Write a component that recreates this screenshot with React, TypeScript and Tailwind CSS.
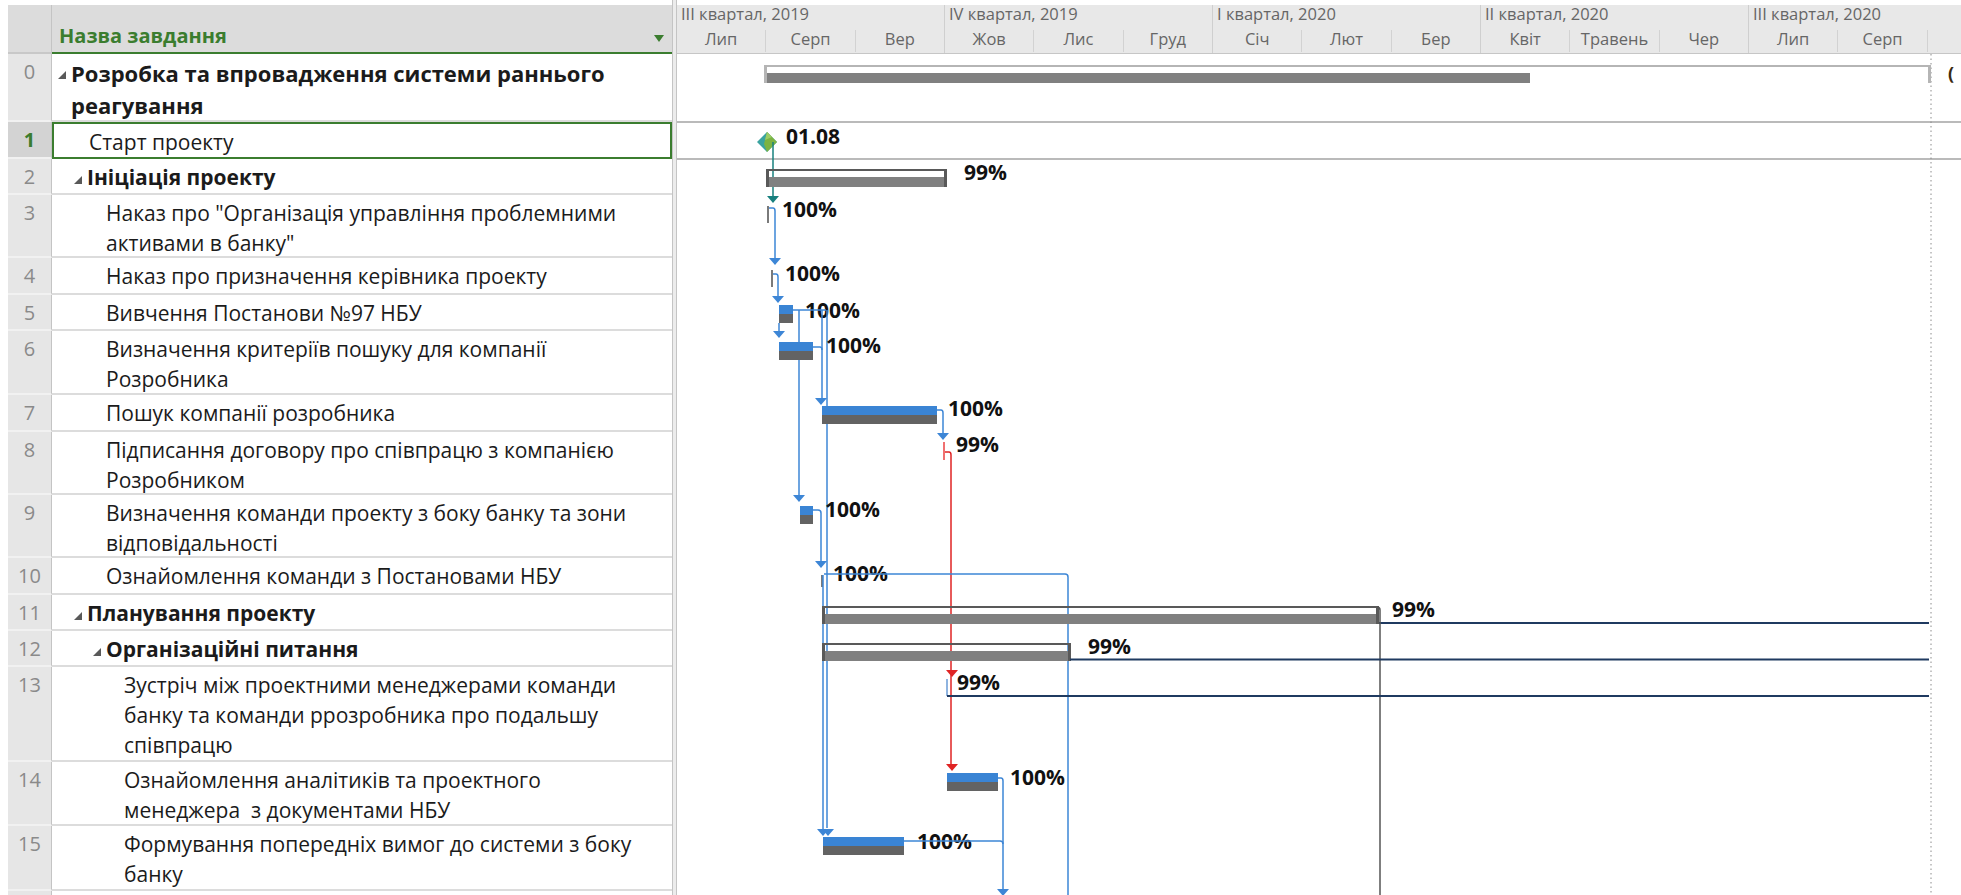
import React from "react";

type Task = {
  id: number;
  lines: string[];
  h: string;
  pad: string;
  summary?: boolean;
  big?: boolean;
  selected?: boolean;
};

const tasks: Task[] = [
  { id: 0, lines: ["Розробка та впровадження системи раннього", "реагування"], h: "h-[68px]", pad: "pl-[6px]", summary: true, big: true },
  { id: 1, lines: ["Старт проекту"], h: "h-[37px]", pad: "pl-[35px]", selected: true },
  { id: 2, lines: ["Ініціація проекту"], h: "h-[36px]", pad: "pl-[22px]", summary: true },
  { id: 3, lines: ['Наказ про "Організація управління проблемними', 'активами в банку"'], h: "h-[63px]", pad: "pl-[54px]" },
  { id: 4, lines: ["Наказ про призначення керівника проекту"], h: "h-[37px]", pad: "pl-[54px]" },
  { id: 5, lines: ["Вивчення Постанови №97 НБУ"], h: "h-[36px]", pad: "pl-[54px]" },
  { id: 6, lines: ["Визначення критеріїв пошуку для компанії", "Розробника"], h: "h-[64px]", pad: "pl-[54px]" },
  { id: 7, lines: ["Пошук компанії розробника"], h: "h-[37px]", pad: "pl-[54px]" },
  { id: 8, lines: ["Підписання договору про співпрацю з компанією", "Розробником"], h: "h-[63px]", pad: "pl-[54px]" },
  { id: 9, lines: ["Визначення команди проекту з боку банку та зони", "відповідальності"], h: "h-[63px]", pad: "pl-[54px]" },
  { id: 10, lines: ["Ознайомлення команди з Постановами НБУ"], h: "h-[37px]", pad: "pl-[54px]" },
  { id: 11, lines: ["Планування проекту"], h: "h-[36px]", pad: "pl-[22px]", summary: true },
  { id: 12, lines: ["Організаційні питання"], h: "h-[36px]", pad: "pl-[41px]", summary: true },
  { id: 13, lines: ["Зустріч між проектними менеджерами команди", "банку та команди ррозробника про подальшу", "співпрацю"], h: "h-[95px]", pad: "pl-[72px]" },
  { id: 14, lines: ["Ознайомлення аналітиків та проектного", "менеджера  з документами НБУ"], h: "h-[64px]", pad: "pl-[72px]" },
  { id: 15, lines: ["Формування попередніх вимог до системи з боку", "банку"], h: "h-[65px]", pad: "pl-[72px]" },
];

// the last month of the final quarter sits past the visible edge, so no label is drawn for it
const quarters = [
  { label: "III квартал, 2019", months: ["Лип", "Серп", "Вер"] },
  { label: "IV квартал, 2019", months: ["Жов", "Лис", "Груд"] },
  { label: "I квартал, 2020", months: ["Січ", "Лют", "Бер"] },
  { label: "II квартал, 2020", months: ["Квіт", "Травень", "Чер"] },
  { label: "III квартал, 2020", months: ["Лип", "Серп", ""] },
];

const BLUE = "#3d86d6";
const BAR_BLUE = "#3a84d4";
const BAR_GRAY = "#636363";
const RED = "#e02424";
const NAVY = "#1f3a60";

const Collapse = () => (
  <span className="w-[13px] shrink-0 flex items-center h-[30px] pt-[6px]">
    <svg width="8" height="8" viewBox="0 0 8 8">
      <polygon points="8,0 8,8 0,8" fill="#595959" />
    </svg>
  </span>
);

const TaskRow = ({ t }: { t: Task }) => (
  <div className={`flex ${t.h}`}>
    <div
      className={`w-[44px] shrink-0 text-center pt-[3px] leading-[30px] text-[20px] border-r border-b-2 border-r-[#c4c4c4] border-b-[#f1f1f1] ${
        t.selected ? "bg-[#d3d3d3] text-[#3b7d2f] font-bold" : "bg-[#e6e6e6] text-[#8a8a8a]"
      }`}
    >
      {t.id}
    </div>
    <div
      className={`flex-1 flex pt-[3px] ${t.pad} ${
        t.selected ? "border-2 border-[#3b7d2f]" : "border-b-2 border-[#dcdcdc]"
      } ${t.id === 0 ? "border-b-0" : ""}`}
    >
      {t.summary && <Collapse />}
      <div
        className={`whitespace-pre text-[#1b1b1b] ${
          t.big ? "text-[22px] leading-[32px] font-bold" : t.summary ? "text-[21px] leading-[30px] font-bold" : "text-[21px] leading-[30px]"
        }`}
      >
        {t.lines.map((l, i) => (
          <div key={i}>{l}</div>
        ))}
      </div>
    </div>
  </div>
);

const Arrow = ({ x, y, c = BLUE }: { x: number; y: number; c?: string }) => (
  <polygon points={`${x - 6},${y - 7} ${x + 6},${y - 7} ${x},${y}`} fill={c} />
);

const Bar = ({ x1, x2, y }: { x1: number; x2: number; y: number }) => (
  <g>
    <rect x={x1} y={y} width={x2 - x1} height={9} fill={BAR_BLUE} />
    <rect x={x1} y={y + 9} width={x2 - x1} height={9} fill={BAR_GRAY} />
  </g>
);

const Summary = ({ x1, x2, y, to, c }: { x1: number; x2: number; y: number; to: number; c: string }) => (
  <g>
    <rect x={x1} y={y + 8} width={to - x1} height={10} fill="#808080" />
    <rect x={x1} y={y} width={x2 - x1} height={2} fill={c} />
    <rect x={x1} y={y} width={3} height={18} fill={c} />
    <rect x={x2 - 3} y={y} width={3} height={18} fill={c} />
  </g>
);

const Stub = ({ x, y1, y2, c = "#7a7a7a" }: { x: number; y1: number; y2: number; c?: string }) => (
  <line x1={x} y1={y1} x2={x} y2={y2} stroke={c} strokeWidth={2} />
);

const Label = ({ x, y, children }: { x: number; y: number; children: React.ReactNode }) => (
  <text x={x} y={y} className="fill-[#111] text-[21px] font-bold">
    {children}
  </text>
);

const Link = ({ d, c = BLUE }: { d: string; c?: string }) => (
  <path d={d} stroke={c} strokeWidth={1.5} fill="none" />
);

const GanttBody = () => (
  <svg width={1284} height={841} className="block">
    <g transform="translate(-677,-54)">
      {/* row grid for the project and start rows */}
      <line x1={677} y1={122} x2={1961} y2={122} stroke="#a3a3a3" strokeWidth={1.5} />
      <line x1={677} y1={159} x2={1961} y2={159} stroke="#a3a3a3" strokeWidth={1.5} />
      <line x1={1931} y1={54} x2={1931} y2={895} stroke="#8c8c8c" strokeWidth={1} strokeDasharray="1.5 3" />

      {/* project summary */}
      <Summary x1={764} x2={1931} y={65} to={1530} c="#b5b5b5" />
      <text x={1948} y={80} className="fill-[#3a2a10] text-[18px] font-bold">(</text>

      {/* start milestone */}
      <polygon points="767,132 777,142 767,152 757,142" fill="#3aa3a0" />
      <polygon points="767,132 777,142 767,152 764,144" fill="#7cb342" />
      <polygon points="767,132 772,137 765,140" fill="#9ccc65" />
      <Label x={786} y={144}>01.08</Label>
      <Link d="M773 142 V196" c="#17807e" />
      <Arrow x={773} y={203} c="#17807e" />

      {/* initiation */}
      <Summary x1={766} x2={947} y={169} to={945} c="#595959" />
      <Label x={964} y={180}>99%</Label>

      <Stub x={768} y1={206} y2={223} />
      <Label x={782} y={217}>100%</Label>
      <Link d="M769 208 H773 Q775 208 775 211 V258" />
      <Arrow x={775} y={265} />

      <Stub x={772} y1={270} y2={287} />
      <Label x={785} y={281}>100%</Label>
      <Link d="M773 274 H776 Q778 274 778 277 V296" />
      <Arrow x={778} y={303} />

      <Bar x1={779} x2={793} y={305} />
      <Label x={805} y={318}>100%</Label>
      <Link d="M793 310 H826" />
      <Link d="M799 310 V495" />
      <Link d="M822 310 V398" />
      <Link d="M827 310 V828" />
      <Link d="M779 323 V331" />
      <Arrow x={779} y={338} />

      <Bar x1={779} x2={813} y={342} />
      <Label x={826} y={353}>100%</Label>
      <Link d="M813 347 H820 Q822 347 822 350" />
      <Arrow x={821} y={405} />

      <Bar x1={822} x2={937} y={406} />
      <Label x={948} y={416}>100%</Label>
      <Link d="M937 410 H941 Q943 410 943 413 V433" />
      <Arrow x={943} y={440} />

      <Stub x={944} y1={442} y2={460} c="#f07070" />
      <Link d="M945 452 H949 Q951 452 951 455 V764" c={RED} />
      <Label x={956} y={452}>99%</Label>

      <Arrow x={799} y={502} />
      <Bar x1={800} x2={813} y={506} />
      <Label x={825} y={517}>100%</Label>
      <Link d="M813 510 H818 Q821 510 821 513 V561" />
      <Arrow x={821} y={568} />

      <Stub x={822} y1={575} y2={587} />
      <Label x={833} y={581}>100%</Label>
      <Link d="M824 574 H1065 Q1068 574 1068 577 V895" />
      <Link d="M823 575 V829" />

      {/* planning */}
      <Summary x1={822} x2={1379} y={606} to={1376} c="#595959" />
      <Label x={1392} y={617}>99%</Label>
      <line x1={1379} y1={623} x2={1929} y2={623} stroke={NAVY} strokeWidth={2} />
      <Link d="M1377 607 Q1380 607 1380 610 V895" c="#555555" />

      <Summary x1={822} x2={1071} y={643} to={1069} c="#595959" />
      <Label x={1088} y={654}>99%</Label>
      <line x1={1070} y1={659.5} x2={1929} y2={659.5} stroke={NAVY} strokeWidth={2} />

      <Arrow x={952} y={677} c={RED} />
      <Stub x={947} y1={679} y2={696} c="#8fb4e0" />
      <Label x={957} y={690}>99%</Label>
      <line x1={947} y1={696} x2={1929} y2={696} stroke={NAVY} strokeWidth={2} />

      <Arrow x={952} y={771} c={RED} />
      <Bar x1={947} x2={998} y={773} />
      <Label x={1010} y={785}>100%</Label>
      <Link d="M998 778 H1001 Q1003 778 1003 781 V889" />
      <Arrow x={1003} y={896} />

      <Arrow x={823} y={836} />
      <Arrow x={828} y={836} />
      <Bar x1={823} x2={904} y={837} />
      <Label x={917} y={849}>100%</Label>
      <Link d="M904 841 H1000 Q1003 841 1003 844" />
    </g>
  </svg>
);

export default function App() {
  return (
    <div className="w-[1961px] h-[895px] overflow-hidden bg-white flex pl-[8px] font-['Open_Sans',sans-serif]">
      {/* task table */}
      <div className="w-[664px] shrink-0 flex flex-col">
        <div className="h-[5px]" />
        <div className="flex h-[49px] shrink-0">
          <div className="w-[44px] bg-[#dcdcdc] border-r border-b-2 border-r-[#c4c4c4] border-b-[#c8c8c8]" />
          <div className="flex-1 bg-[#dcdcdc] border-b-2 border-[#3b7d2f] flex items-end justify-between pl-[7px] pr-[8px] pb-[2px]">
            <span className="text-[20px] font-bold text-[#3b7d2f] leading-[28px]">Назва завдання</span>
            <svg width="10" height="7" viewBox="0 0 10 7" className="mb-[8px]">
              <polygon points="0,0 10,0 5,7" fill="#3b7d2f" />
            </svg>
          </div>
        </div>
        {tasks.map((t) => (
          <TaskRow key={t.id} t={t} />
        ))}
        <div className="flex flex-1">
          <div className="w-[44px] bg-[#e6e6e6] border-r border-[#c4c4c4]" />
          <div className="flex-1" />
        </div>
      </div>

      {/* split bar */}
      <div className="w-[5px] shrink-0 bg-[#ececec] border-x border-[#c4c4c4]" />

      {/* gantt */}
      <div className="w-[1284px] shrink-0 flex flex-col overflow-hidden">
        <div className="h-[5px]" />
        <div className="flex h-[49px] shrink-0 bg-[#e8e8e8] border-b border-[#c6c6c6] text-[#666] text-[16.5px]">
          {quarters.map((q, i) => (
            <div key={i} className="w-[268px] shrink-0 flex flex-col border-r border-[#cfcfcf]">
              <div className="h-[25px] pl-[4px] leading-[18px]">{q.label}</div>
              <div className="flex flex-1 pb-[1px]">
                {q.months.map((m, j) => (
                  <div key={j} className="flex-1 text-center leading-[18px] border-r border-[#d2d2d2] last:border-r-0">
                    {m}
                  </div>
                ))}
              </div>
            </div>
          ))}
        </div>
        <GanttBody />
      </div>
    </div>
  );
}
